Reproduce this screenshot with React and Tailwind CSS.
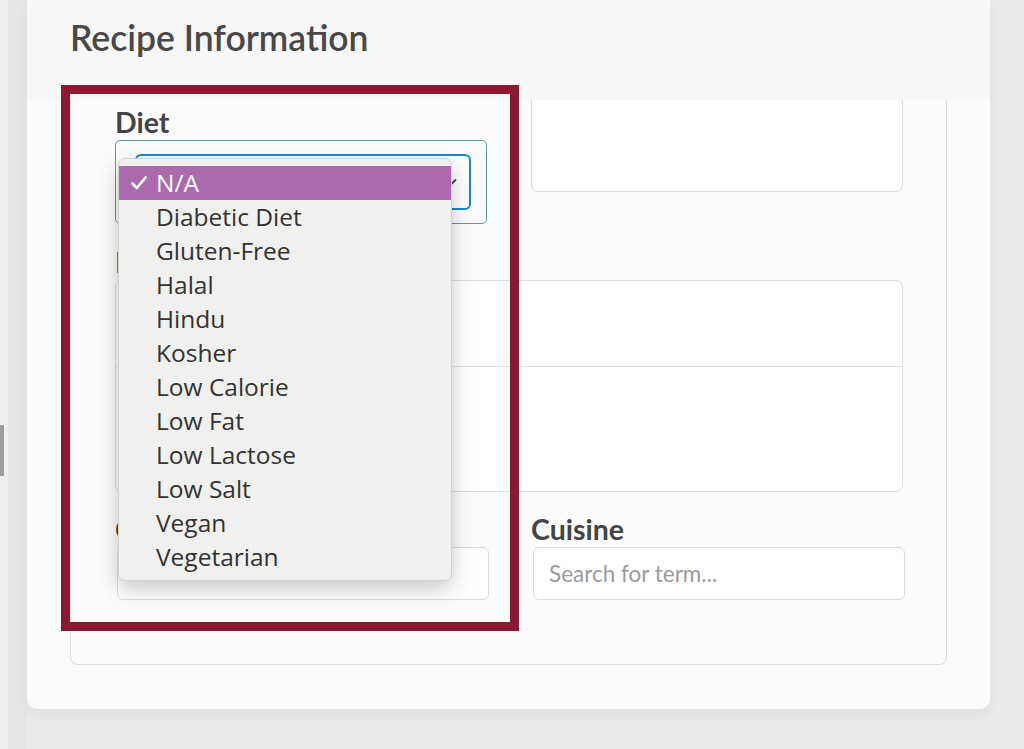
const DIETS = [
  'N/A',
  'Diabetic Diet',
  'Gluten-Free',
  'Halal',
  'Hindu',
  'Kosher',
  'Low Calorie',
  'Low Fat',
  'Low Lactose',
  'Low Salt',
  'Vegan',
  'Vegetarian',
];

function Label({ children }) {
  return <div className="h-[34px] text-[28.5px] leading-[34px] font-bold text-[#444]">{children}</div>;
}

function DietMenu() {
  return (
    <div className="absolute left-[118px] top-[158px] h-[423px] w-[334px] rounded-[7px] border border-[#d2d2d2] bg-[#f0f0ef] pt-[7px] shadow-[0_8px_22px_rgba(0,0,0,0.22)] font-['Open_Sans',sans-serif]">
      {DIETS.map((d, i) => (
        <div
          key={d}
          className={`flex h-[34px] items-center text-[24.5px] leading-[34px] ${
            i === 0 ? 'bg-[#ac6aae] text-white' : 'text-[#333]'
          }`}
        >
          <span className="flex w-[37px] justify-end pr-[9px]">
            {i === 0 && (
              <svg width="16" height="14" viewBox="0 0 16 14" fill="none">
                <path d="M1.5 7.5 L5.8 12 L14.5 1.5" stroke="white" strokeWidth="2.6" strokeLinecap="round" strokeLinejoin="round" />
              </svg>
            )}
          </span>
          {d}
        </div>
      ))}
    </div>
  );
}

export default function App() {
  return (
    <div className="relative flex h-[749px] w-[1024px] overflow-hidden bg-[#eaeaea] font-['Lato',sans-serif]">
      <div className="flex w-[8px] flex-col bg-[#eeeeee]">
        <div className="mt-[425px] h-[51px] w-[4px] bg-[#9d9d9d]" />
      </div>
      <div className="w-[19px] bg-[#e6e6e6]" />

      <div className="flex h-[709px] w-[963px] flex-col rounded-b-[10px] bg-[#fbfbfb] shadow-[0_6px_12px_rgba(0,0,0,0.05)]">
        <header className="h-[100px] bg-[#f7f7f7] pl-[43px] pt-[18px]">
          <h1 className="text-[35.5px] leading-[40px] font-semibold text-[#484848]">Recipe Information</h1>
        </header>

        <div className="ml-[43px] h-[565px] w-[877px] rounded-b-[8px] border-x border-b border-[#dedede] bg-[#fcfcfc] pl-[44px]">
          <div className="flex gap-[44px]">
            <div className="pt-[5px]">
              <Label>Diet</Label>
              <div className="mt-[1px] h-[84px] w-[372px] rounded-[5px] border-[1.5px] border-[#5b9aa3] pl-[18.5px] pt-[12.5px]">
                <div className="flex h-[56px] w-[336px] items-center justify-end rounded-[6px] border-2 border-[#1b87c6] bg-white pr-[12px]">
                  <svg width="10" height="7" viewBox="0 0 10 7">
                    <path d="M1 1.5 L5 5.5 L9 1.5" stroke="#444" strokeWidth="1.8" fill="none" />
                  </svg>
                </div>
              </div>
            </div>
            <div className="h-[92px] w-[372px] rounded-b-[7px] border-x border-b border-[#dcdcdc] bg-white" />
          </div>

          <div className="mt-[21px]">
            <Label>Ingredients</Label>
            <div className="mt-[1px] flex h-[212px] w-[788px] flex-col rounded-[7px] border border-[#dcdcdc] bg-white">
              <div className="h-[86px] border-b border-[#e2e2e2]" />
            </div>
          </div>

          <div className="mt-[20px] flex gap-[42px]">
            <div className="w-[374px]">
              <Label>Course</Label>
              <div className="ml-[2px] mt-[1px] h-[53px] w-[372px] rounded-[6px] border border-[#dcdcdc] bg-white" />
            </div>
            <div className="w-[374px]">
              <Label>Cuisine</Label>
              <div className="ml-[2px] mt-[1px] flex h-[53px] w-[372px] items-center rounded-[6px] border border-[#dcdcdc] bg-white pl-[15px] text-[22.5px] text-[#9b9b9b]">
                Search for term...
              </div>
            </div>
          </div>
        </div>
      </div>

      <DietMenu />
      <div className="absolute left-[61px] top-[85px] h-[546px] w-[458px] border-[9px] border-[#8c1832]" />
    </div>
  );
}
